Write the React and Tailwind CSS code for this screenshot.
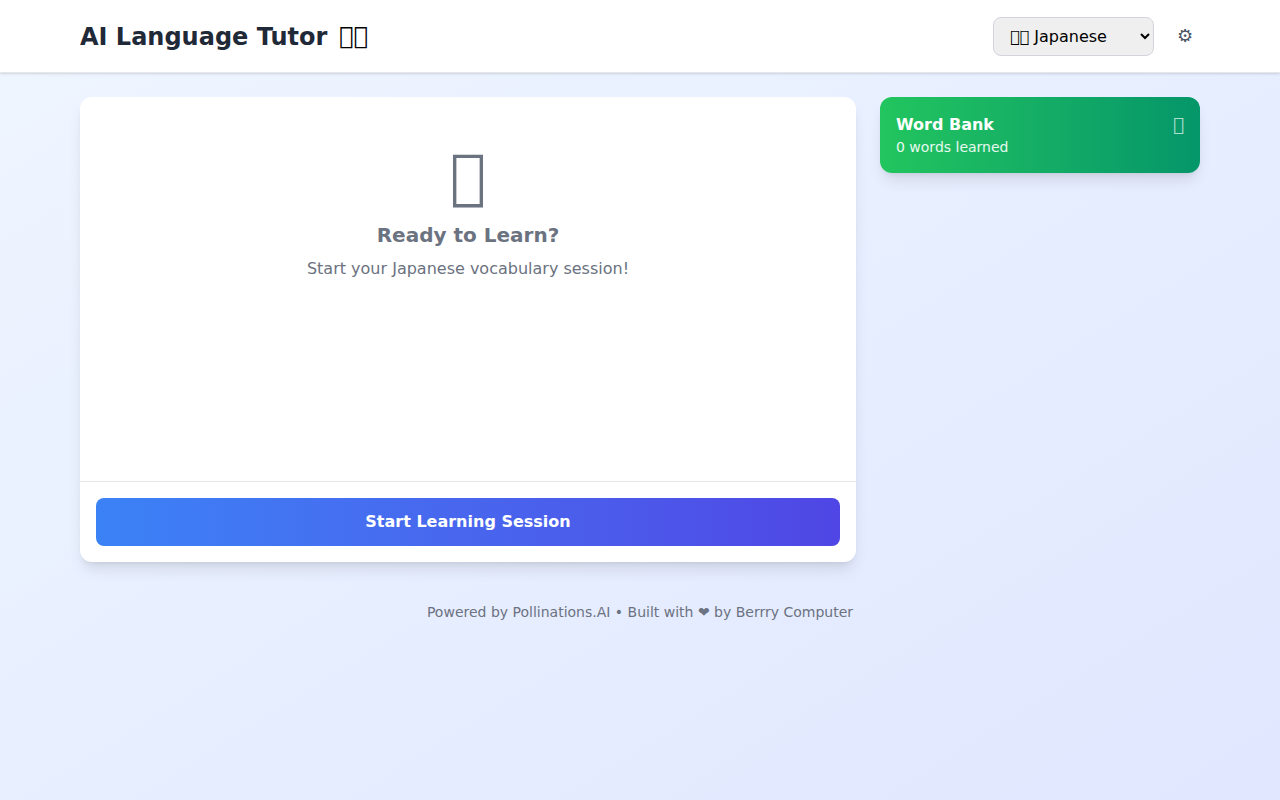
export default function App() {
  const font = "font-['DejaVu_Sans',sans-serif]";
  return (
    <div className={`min-h-[800px] bg-gradient-to-br from-[#eff6ff] to-[#e0e7ff] ${font}`}>
      <header className="bg-white shadow-sm border-b border-[#e5e7eb] h-[73px] px-20 flex items-center justify-between">
        <div className="flex items-center gap-3">
          <h1 className="text-2xl font-bold text-[#1f2937] mt-0.5">AI Language Tutor</h1>
          <span className="text-2xl text-black">{"\uE000\uE000"}</span>
        </div>
        <div className="flex items-center gap-4">
          <select defaultValue="ja" className="w-[161px] h-[39px] rounded-lg border border-[#d1d5db] px-3 text-base text-black bg-[#efefef] appearance-auto">
            <option value="ja">{"\uE000\uE000"} Japanese</option>
          </select>
          <button className="w-[30px] h-8 flex items-center justify-center text-[#4b5563] text-lg">{"\u2699"}</button>
        </div>
      </header>
      <main className="px-20 pt-6 grid grid-cols-[776px_320px] gap-6 items-start">
        <section className="bg-white rounded-xl shadow-lg h-[465px] flex flex-col">
          <div className="flex-1 pt-[49px] flex flex-col items-center text-center">
            <div className="text-6xl leading-[60px] text-[#6b7280] mb-[15px]">{"\uE000"}</div>
            <h2 className="text-xl font-bold text-[#6b7280]">Ready to Learn?</h2>
            <p className="text-base text-[#6b7280] mt-2">Start your Japanese vocabulary session!</p>
          </div>
          <div className="border-t border-[#e5e7eb] p-4">
            <button className="w-full h-12 rounded-lg bg-gradient-to-r from-[#3b82f6] to-[#4f46e5] text-white font-bold text-base">Start Learning Session</button>
          </div>
        </section>
        <aside className="h-[76px] rounded-xl shadow-lg bg-gradient-to-r from-[#22c55e] to-[#059669] text-white p-4 flex items-center justify-between">
          <div>
            <h3 className="font-bold text-base leading-6">Word Bank</h3>
            <p className="text-sm text-white/90 leading-5">0 words learned</p>
          </div>
          <span className="text-lg text-white/70 self-start leading-6">{"\uE000"}</span>
        </aside>
      </main>
      <footer className="text-center text-sm text-[#6b7280] mt-10">Powered by Pollinations.AI • Built with {"\u2764"} by Berrry Computer</footer>
    </div>
  );
}
